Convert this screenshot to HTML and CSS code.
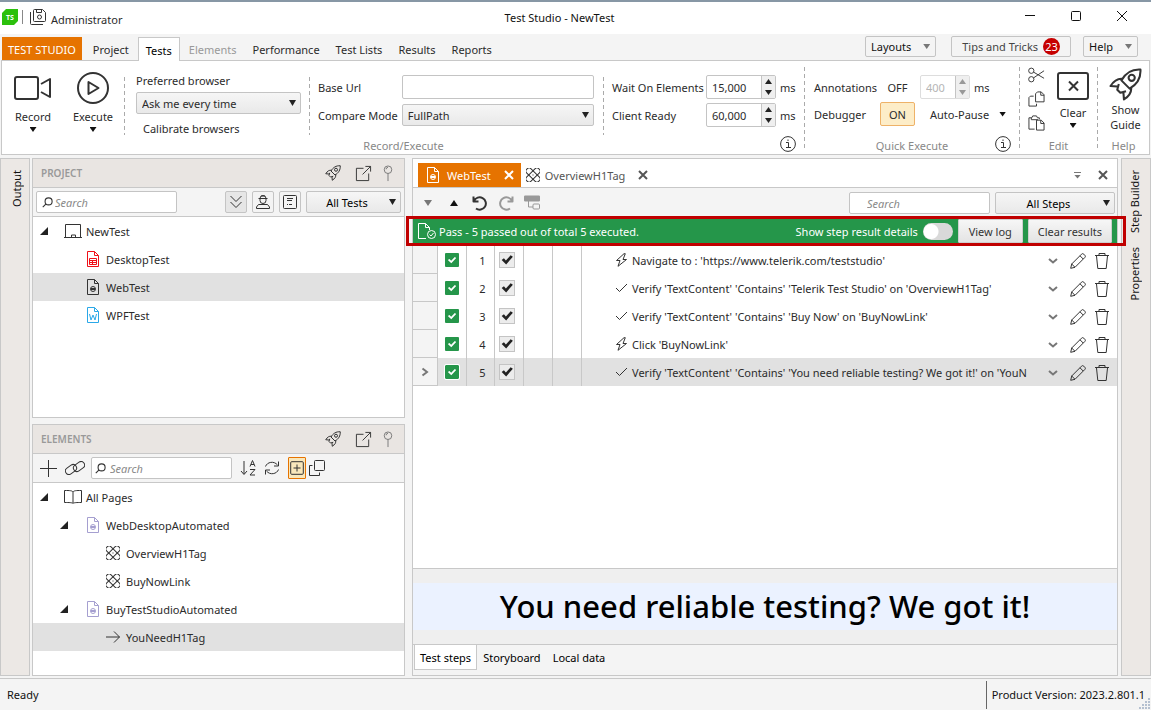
FILE: index.html
```html
<!DOCTYPE html>
<html lang="en">
<head>
<meta charset="utf-8">
<title>Test Studio - NewTest</title>
<link rel="stylesheet" href="styles.css">
</head>
<body>
<svg class="symbols" aria-hidden="true">
  <symbol id="rocket" viewBox="0 0 32 32"><path d="M30.500 1.500C22 1 16 5 12 12l8 8c7-4 11-10 10.500-18.500zM13 10.500C8 10 5 12 1.500 17.500l6.500.5M21.500 19c.500 5-1.500 8-7 11.500L14 24M9.500 15.500L8 21l3 3 5.500-1.500"/><circle cx="22" cy="9.500" r="3"/></symbol>
  <symbol id="popout" viewBox="0 0 18 18"><path d="M9 3.500H1.500v13h13V9M8 10L16.500 1.500M11 1.500h5.500V7"/></symbol>
  <symbol id="pin" viewBox="0 0 10 18"><circle cx="5" cy="5" r="4"/><path d="M5 9v8M3 4.500a2 2 0 0 1 2-2"/></symbol>
  <symbol id="doc" viewBox="0 0 12 16"><path d="M.5.5h7l4 4v11H.5zM7.500.5v4h4"/></symbol>
  <symbol id="webdoc" viewBox="0 0 12 16"><path d="M.5.5h7l4 4v11H.5zM7.500.5v4h4"/><circle cx="6" cy="10" r="2.500"/><path d="M4 9.500h4M4 10.500h4"/></symbol>
  <symbol id="atom" viewBox="0 0 14 14"><rect x="4" y="-1.500" width="6" height="17" rx="2.400" transform="rotate(45 7 7)"/><rect x="4" y="-1.500" width="6" height="17" rx="2.400" transform="rotate(-45 7 7)"/><path d="M6.500 7h1"/></symbol>
  <symbol id="lens" viewBox="0 0 10 10"><circle cx="6" cy="4" r="3.200"/><path d="M3.700 6.300L.7 9.300"/></symbol>
  <symbol id="info" viewBox="0 0 16 16"><circle cx="8" cy="8" r="7.400"/><path d="M6 6.500h2.500v5M6 11.500h5M8 3.500v1.500"/></symbol>
  <symbol id="pencil" viewBox="0 0 16 16"><path d="M.7 15.300l1-4.300L11.500 1.200a1.600 1.600 0 0 1 2.300 0l1 1a1.600 1.600 0 0 1 0 2.300L5 14.300zM10 2.800L13.200 6M1.700 11L5 14.300"/></symbol>
  <symbol id="trash" viewBox="0 0 14 16"><path d="M0 2.500h14M4 2.500v-2h6v2M1.500 3l1.300 12.500h8.400L12.500 3"/></symbol>
  <symbol id="bolt" viewBox="0 0 12 14"><path d="M8.500.7L1 7.500h3.500L2.500 13.300 11 6.500H7.500L9.800.7z"/></symbol>
  <symbol id="tick" viewBox="0 0 12 14"><path d="M.5 7l3.500 3.500L11.500 3"/></symbol>
  <symbol id="cross" viewBox="0 0 10 10"><path d="M1 1l8 8M9 1L1 9"/></symbol>
  <symbol id="chevron" viewBox="0 0 10 6"><path d="M1 1l4 3.500L9 1"/></symbol>
</svg>

<header class="titlebar">
  <div class="titlebar-left">
    <svg class="logo" viewBox="0 0 16 16"><path d="M4 0h12v12l-4 4H0V4z"/><text x="8" y="11">TS</text></svg>
    <span class="title-divider"></span>
    <svg class="icon save" viewBox="0 0 16 16"><path d="M4.500.5h8l3 3v8a1 1 0 0 1-1 1h-10a1 1 0 0 1-1-1v-10a1 1 0 0 1 1-1zM6.500.5v3h5v-3M.5 3v11.500a1 1 0 0 0 1 1H13"/><circle cx="9.500" cy="8" r="2"/></svg>
    <span class="user">Administrator</span>
  </div>
  <h1 class="title">Test Studio - NewTest</h1>
  <div class="window-buttons">
    <button aria-label="Minimize"><svg class="icon" viewBox="0 0 10 10"><path d="M0 4.500h10"/></svg></button>
    <button aria-label="Maximize"><svg class="icon" viewBox="0 0 10 10"><rect x=".5" y=".5" width="9" height="9" rx="1"/></svg></button>
    <button aria-label="Close"><svg class="icon" viewBox="0 0 10 10"><path d="M0 0l10 10M10 0L0 10"/></svg></button>
  </div>
</header>

<nav class="menubar">
  <button class="menu-tab brand">TEST STUDIO</button>
  <button class="menu-tab">Project</button>
  <button class="menu-tab selected">Tests</button>
  <button class="menu-tab" disabled>Elements</button>
  <button class="menu-tab">Performance</button>
  <button class="menu-tab">Test Lists</button>
  <button class="menu-tab">Results</button>
  <button class="menu-tab">Reports</button>
  <div class="menu-right">
    <button class="outline-button layouts">Layouts<span class="arrow grey"></span></button>
    <button class="outline-button tips">Tips and Tricks<span class="count">23</span></button>
    <button class="outline-button">Help<span class="arrow grey"></span></button>
  </div>
</nav>

<section class="ribbon">
  <div class="group group-main">
    <div class="group-body">
      <button class="big-button"><svg class="icon heavy camera" viewBox="0 0 38 28"><rect x="1" y="3" width="23" height="22" rx="2"/><path d="M27 10l9-5v18l-9-5"/></svg>Record<span class="arrow"></span></button>
      <button class="big-button"><svg class="icon heavy play" viewBox="0 0 32 32"><circle cx="16" cy="16" r="15"/><path d="M11.500 10v12l10-6z"/></svg>Execute<span class="arrow"></span></button>
      <div class="column browser">
        <label for="browser">Preferred browser</label>
        <span class="select"><select id="browser"><option>Ask me every time</option></select></span>
        <button class="text-button">Calibrate browsers</button>
      </div>
      <div class="column fields">
        <label for="url">Base Url</label><input id="url" class="box" type="text">
        <label for="mode">Compare Mode</label><span class="select"><select id="mode"><option>FullPath</option></select></span>
      </div>
      <div class="column waits">
        <label for="wait">Wait On Elements</label>
        <span class="spinner"><input id="wait" type="text" value="15,000"><span class="spin"><button aria-label="Increase wait"></button><button aria-label="Decrease wait"></button></span></span><span>ms</span>
        <label for="ready">Client Ready</label>
        <span class="spinner"><input id="ready" type="text" value="60,000"><span class="spin"><button aria-label="Increase ready"></button><button aria-label="Decrease ready"></button></span></span><span>ms</span>
      </div>
    </div>
    <div class="group-foot"><span>Record/Execute</span><svg class="icon info"><use href="#info"/></svg></div>
  </div>
  <div class="group group-quick">
    <div class="group-body quick">
      <label for="delay">Annotations</label>
      <button class="toggle">OFF</button>
      <span class="quick-row"><span class="spinner small"><input id="delay" type="text" value="400" disabled><span class="spin"><button aria-label="Increase delay" disabled></button><button aria-label="Decrease delay" disabled></button></span></span><span>ms</span></span>
      <span>Debugger</span>
      <button class="toggle on">ON</button>
      <button class="text-button pause">Auto-Pause<span class="arrow"></span></button>
    </div>
    <div class="group-foot"><span>Quick Execute</span><svg class="icon info"><use href="#info"/></svg></div>
  </div>
  <div class="group group-edit">
    <div class="group-body edit">
      <div class="edit-icons">
        <button aria-label="Cut"><svg class="icon" viewBox="0 0 18 16"><circle cx="3.500" cy="3.500" r="2.800"/><circle cx="3.500" cy="12.500" r="2.800"/><path d="M6 5l11 6.500M6 11l11-7.500"/></svg></button>
        <button aria-label="Copy"><svg class="icon" viewBox="0 0 18 16"><path d="M10 .5h4l3 3v7.500H8V2.500zM6 5H2.500L1 6.500v9h8V13M13.500.5V4H17"/></svg></button>
        <button aria-label="Paste"><svg class="icon" viewBox="0 0 18 16"><path d="M7 14.500H1v-12h3l1-2h4l1 2h2V4M3.500 2.500v2h7M9 5h5l3 3v7.500H9zM13.500 5v3.500H17"/></svg></button>
      </div>
      <button class="big-button clear"><svg class="icon heavy" viewBox="0 0 32 28"><rect x="1" y="1" width="30" height="26" rx="2"/><path d="M12 9.500l9 9M21 9.500l-9 9"/></svg>Clear<span class="arrow"></span></button>
    </div>
    <div class="group-foot"><span>Edit</span></div>
  </div>
  <div class="group group-help">
    <div class="group-body"><button class="big-button guide"><svg class="icon heavy"><use href="#rocket"/></svg>Show Guide</button></div>
    <div class="group-foot"><span>Help</span></div>
  </div>
</section>

<div class="workspace">
  <aside class="rail left"><button>Output</button></aside>

  <div class="side">
    <section class="panel project">
      <header class="panel-head"><h2>PROJECT</h2>
        <button aria-label="Guide"><svg class="icon i16"><use href="#rocket"/></svg></button>
        <button class="popout" aria-label="Pop out"><svg class="icon i18"><use href="#popout"/></svg></button>
        <button aria-label="Pin"><svg class="icon pin"><use href="#pin"/></svg></button>
      </header>
      <div class="toolbar">
        <label class="search"><svg class="icon lens"><use href="#lens"/></svg><input type="text" placeholder="Search" aria-label="Search project"></label>
        <span class="spacer"></span>
        <button class="tool pressed" aria-label="Expand all"><svg class="icon i14" viewBox="0 0 14 14"><path d="M1.500 1L7 6.500 12.500 1M1.500 7L7 12.500 12.500 7"/></svg></button>
        <button class="tool" aria-label="Owner"><svg class="icon i14" viewBox="0 0 14 14"><path d="M2.500 3.500h9M4 3.500a3 3 0 0 1 6 0v2a3 3 0 0 1-6 0zM6 0v2M8 0v2M.5 13.500v-1.500l2-2.500h9l2 2.500v1.500z"/></svg></button>
        <button class="tool" aria-label="Details"><svg class="icon i14" viewBox="0 0 14 14"><rect x=".5" y=".5" width="13" height="13" rx="1"/><path d="M4 3.500h6M4 5.500h5M4 9.500h1M6 9.500h3"/></svg></button>
        <span class="select filter"><select aria-label="Filter tests"><option>All Tests</option></select></span>
      </div>
      <ul class="tree">
        <li class="node l1"><span class="twist"></span><svg class="icon laptop" viewBox="0 0 18 14"><path d="M1.500 13V.5h15V13M0 13.500h18M7.500 13v-2h4v2"/></svg>NewTest</li>
        <li class="node l2 red"><svg class="icon doc" viewBox="0 0 12 16"><use href="#doc"/><path d="M2.500 7.500h7v6h-7zM2.500 9.500h7M2.500 11.500h7M5.500 9v4"/></svg><span>DesktopTest</span></li>
        <li class="node l2 selected"><svg class="icon doc"><use href="#webdoc"/></svg>WebTest</li>
        <li class="node l2 blue"><svg class="icon doc" viewBox="0 0 12 16"><use href="#doc"/><path d="M2.500 7l1.500 6 2-5 2 5 1.500-6"/></svg><span>WPFTest</span></li>
      </ul>
    </section>

    <section class="panel">
      <header class="panel-head"><h2>ELEMENTS</h2>
        <button aria-label="Guide"><svg class="icon i16"><use href="#rocket"/></svg></button>
        <button class="popout" aria-label="Pop out"><svg class="icon i18"><use href="#popout"/></svg></button>
        <button aria-label="Pin"><svg class="icon pin"><use href="#pin"/></svg></button>
      </header>
      <div class="toolbar elements-bar">
        <button aria-label="Add"><svg class="icon i18" viewBox="0 0 17 17"><path d="M8.500 0v17M0 8.500h17"/></svg></button>
        <button aria-label="Link"><svg class="icon link" viewBox="0 0 20 14"><rect x="0" y="5" width="12" height="7" rx="3.500" transform="rotate(-35 6 8.500)"/><rect x="8" y="2" width="12" height="7" rx="3.500" transform="rotate(-35 14 5.500)"/></svg></button>
        <label class="search"><svg class="icon lens"><use href="#lens"/></svg><input type="text" placeholder="Search" aria-label="Search elements"></label>
        <button class="sort" aria-label="Sort"><svg class="icon i16" viewBox="0 0 16 16"><path d="M4 1v13M1 11l3 3.500L7 11M10 6.500l2.500-6 2.500 6M11 4.500h3M10 9.500h5l-5 5.500h5"/></svg></button>
        <button aria-label="Refresh"><svg class="icon i16" viewBox="0 0 16 16"><path d="M1.500 6.500C3 2 10 .5 13.500 5M14.500 1.500V6H10M14.500 9.500C13 14 6 15.500 2.500 11M1.500 14.500V10H6"/></svg></button>
        <button class="lit" aria-label="Highlight"><svg class="icon i14" viewBox="0 0 14 14"><rect x=".7" y=".7" width="12.600" height="12.600" rx="1"/><path d="M7 3.500v7M3.500 7h7"/></svg></button>
        <button aria-label="Duplicate"><svg class="icon i16" viewBox="0 0 16 16"><rect x="5.500" y=".5" width="10" height="10" rx="1"/><path d="M3.500 5.500h-3v10h10v-3"/></svg></button>
      </div>
      <ul class="tree">
        <li class="node l1"><span class="twist"></span><svg class="icon book" viewBox="0 0 18 14"><path d="M9 2C8 .5 6 .5.5.5v12c5 0 7.500 0 8.500 1 1-1 3.500-1 8.500-1V.5C12 .5 10 .5 9 2zM9 2v11"/></svg>All Pages</li>
        <li class="node l2 page"><span class="twist"></span><svg class="icon doc"><use href="#webdoc"/></svg><span>WebDesktopAutomated</span></li>
        <li class="node l3"><svg class="icon i14"><use href="#atom"/></svg>OverviewH1Tag</li>
        <li class="node l3"><svg class="icon i14"><use href="#atom"/></svg>BuyNowLink</li>
        <li class="node l2 page"><span class="twist"></span><svg class="icon doc"><use href="#webdoc"/></svg><span>BuyTestStudioAutomated</span></li>
        <li class="node l3 selected"><svg class="icon i14" viewBox="0 0 14 14"><path d="M0 7h13.500M8 1.500L13.500 7 8 12.500"/></svg>YouNeedH1Tag</li>
      </ul>
    </section>
  </div>

  <main class="editor">
    <div class="doc-tabs">
      <div class="doc-tab active"><svg class="icon doc"><use href="#webdoc"/></svg>WebTest<button aria-label="Close WebTest"><svg class="icon close"><use href="#cross"/></svg></button></div>
      <div class="doc-tab"><svg class="icon i14"><use href="#atom"/></svg>OverviewH1Tag<button aria-label="Close OverviewH1Tag"><svg class="icon close"><use href="#cross"/></svg></button></div>
      <span class="spacer"></span>
      <button class="overflow" aria-label="Tab list"><span class="arrow grey"></span></button>
      <button aria-label="Close all"><svg class="icon close"><use href="#cross"/></svg></button>
    </div>
    <div class="toolbar editor-bar">
      <button class="move" aria-label="Move down"><span class="arrow grey"></span></button>
      <button class="move" aria-label="Move up"><span class="arrow up"></span></button>
      <button aria-label="Undo"><svg class="icon heavy i16" viewBox="0 0 16 16"><path d="M1.500 1.500v5h5M2 6a6.200 6.200 0 1 1 2 7.500"/></svg></button>
      <button class="faded" aria-label="Redo"><svg class="icon heavy i16" viewBox="0 0 16 16"><path d="M14.500 1.500v5h-5M14 6a6.200 6.200 0 1 0-2 7.500"/></svg></button>
      <button class="faded" aria-label="Group"><svg class="icon i16" viewBox="0 0 16 14"><rect x="0" y="0" width="16" height="5" rx="1" fill="currentColor"/><path d="M4.500 5v6H9"/><rect x="9" y="8" width="6.500" height="5" rx="1"/></svg></button>
      <span class="spacer"></span>
      <label class="search steps-search"><input type="text" placeholder="Search" aria-label="Search steps"></label>
      <span class="select steps-filter"><select aria-label="Filter steps"><option>All Steps</option></select></span>
    </div>
    <div class="result">
      <svg class="icon result-icon" viewBox="0 0 18 16"><path d="M8 15.500H.5V.5h7l4 4V7M7.500.5v4h4"/><circle cx="13.500" cy="11.500" r="4"/><path d="M11.500 11.500l1.500 1.500 2.500-3"/></svg>
      <span>Pass - 5 passed out of total 5 executed.</span>
      <span class="spacer"></span>
      <label class="switch">Show step result details<input type="checkbox"></label>
      <button class="result-button">View log</button>
      <button class="result-button">Clear results</button>
    </div>
    <div class="steps-area">
      <table class="steps">
        <colgroup><col class="c-mark"><col class="c-status"><col class="c-num"><col class="c-check"><col class="c-indent"><col class="c-indent"><col><col class="c-actions"></colgroup>
        <tbody>
          <tr><td></td><td><span class="passed"></span></td><td>1</td><td><input type="checkbox" aria-label="Enable step 1" checked></td><td></td><td></td><td><div class="step"><svg class="icon"><use href="#bolt"/></svg>Navigate to : 'https://www.telerik.com/teststudio'</div></td><td><div class="actions"><button aria-label="Expand"><svg class="icon chev"><use href="#chevron"/></svg></button><button aria-label="Edit"><svg class="icon i16"><use href="#pencil"/></svg></button><button aria-label="Delete"><svg class="icon trash"><use href="#trash"/></svg></button></div></td></tr>
          <tr><td></td><td><span class="passed"></span></td><td>2</td><td><input type="checkbox" aria-label="Enable step 2" checked></td><td></td><td></td><td><div class="step"><svg class="icon"><use href="#tick"/></svg>Verify 'TextContent' 'Contains' 'Telerik Test Studio' on 'OverviewH1Tag'</div></td><td><div class="actions"><button aria-label="Expand"><svg class="icon chev"><use href="#chevron"/></svg></button><button aria-label="Edit"><svg class="icon i16"><use href="#pencil"/></svg></button><button aria-label="Delete"><svg class="icon trash"><use href="#trash"/></svg></button></div></td></tr>
          <tr><td></td><td><span class="passed"></span></td><td>3</td><td><input type="checkbox" aria-label="Enable step 3" checked></td><td></td><td></td><td><div class="step"><svg class="icon"><use href="#tick"/></svg>Verify 'TextContent' 'Contains' 'Buy Now' on 'BuyNowLink'</div></td><td><div class="actions"><button aria-label="Expand"><svg class="icon chev"><use href="#chevron"/></svg></button><button aria-label="Edit"><svg class="icon i16"><use href="#pencil"/></svg></button><button aria-label="Delete"><svg class="icon trash"><use href="#trash"/></svg></button></div></td></tr>
          <tr><td></td><td><span class="passed"></span></td><td>4</td><td><input type="checkbox" aria-label="Enable step 4" checked></td><td></td><td></td><td><div class="step"><svg class="icon"><use href="#bolt"/></svg>Click 'BuyNowLink'</div></td><td><div class="actions"><button aria-label="Expand"><svg class="icon chev"><use href="#chevron"/></svg></button><button aria-label="Edit"><svg class="icon i16"><use href="#pencil"/></svg></button><button aria-label="Delete"><svg class="icon trash"><use href="#trash"/></svg></button></div></td></tr>
          <tr class="current"><td><svg class="icon current-mark" viewBox="0 0 8 10"><path d="M1.500 1.500L6 5 1.500 8.500"/></svg></td><td><span class="passed"></span></td><td>5</td><td><input type="checkbox" aria-label="Enable step 5" checked></td><td></td><td></td><td><div class="step"><svg class="icon"><use href="#tick"/></svg>Verify 'TextContent' 'Contains' 'You need reliable testing? We got it!' on 'YouN</div></td><td><div class="actions"><button aria-label="Expand"><svg class="icon chev"><use href="#chevron"/></svg></button><button aria-label="Edit"><svg class="icon i16"><use href="#pencil"/></svg></button><button aria-label="Delete"><svg class="icon trash"><use href="#trash"/></svg></button></div></td></tr>
        </tbody>
      </table>
    </div>
    <div class="preview"><div class="preview-text">You need reliable testing? We got it!</div></div>
    <nav class="bottom-tabs">
      <button class="selected">Test steps</button><button>Storyboard</button><button>Local data</button>
    </nav>
  </main>

  <aside class="rail right"><button>Step Builder</button><button>Properties</button></aside>
</div>

<footer class="statusbar">
  <span>Ready</span>
  <span class="version">Product Version: 2023.2.801.1</span>
  <svg class="grip" viewBox="0 0 11 11" aria-hidden="true"><path d="M9 0h2v2H9zM6 3h2v2H6zM9 3h2v2H9zM3 6h2v2H3zM6 6h2v2H6zM9 6h2v2H9zM0 9h2v2H0zM3 9h2v2H3zM6 9h2v2H6zM9 9h2v2H9z"/></svg>
</footer>
</body>
</html>
```

FILE: styles.css
```css
* { box-sizing: border-box; }

body {
  margin: 0;
  min-height: 100vh;
  display: flex;
  flex-direction: column;
  background: #f4f4f4;
  color: #2b2b2b;
  font: 11px/15px "Noto Sans", "Open Sans", sans-serif;
}

button, input, select { font: inherit; color: inherit; margin: 0; }
button { display: flex; align-items: center; justify-content: center; padding: 0; border: 0; background: none; white-space: nowrap; }
label, span { white-space: nowrap; }

.symbols { display: none; }
.icon { display: block; flex: none; fill: none; stroke: #333; stroke-width: 1; color: #333; }
.heavy { stroke-width: 2; stroke-linejoin: round; }
.i14 { width: 14px; height: 14px; }
.i16 { width: 16px; height: 16px; }
.i18 { width: 17px; height: 17px; }
.spacer { flex: 1; }

.arrow {
  width: 7px;
  height: 5px;
  flex: none;
  background: #111;
  clip-path: polygon(0 0, 100% 0, 50% 100%);
}
.arrow.grey { background: #777; }
.arrow.up { clip-path: polygon(50% 0, 100% 100%, 0 100%); }

/* Title bar */
.titlebar {
  display: grid;
  grid-template-columns: 1fr auto 1fr;
  align-items: center;
  height: 34px;
  padding-bottom: 2px;
  border-top: 2px solid #8797a5;
  background: #fff;
}
.titlebar-left { display: flex; align-items: center; gap: 4px; padding-left: 2px; }
.logo { width: 16px; height: 16px; fill: #2cc00d; }
.logo text { fill: #fff; font: bold 7px "Noto Sans", sans-serif; text-anchor: middle; }
.title-divider { width: 1px; height: 14px; margin: 0 3px 0 0; background: #888; }
.save { width: 16px; height: 16px; }
.user { padding: 5px 0 0 1px; }
.title { margin: 0 32px 0 0; font-size: 11px; font-weight: 400; color: #111; }
.window-buttons { display: flex; justify-content: flex-end; padding: 0 6px 2px 0; }
.window-buttons button { width: 46px; height: 26px; }
.window-buttons .icon { width: 10px; height: 10px; stroke: #111; }

/* Menu bar */
.menubar {
  position: relative;
  display: flex;
  align-items: flex-end;
  height: 26px;
  padding: 0 13px 0 2px;
}
.menu-tab { height: 23px; padding: 2px 8px 0; }
.menu-tab:disabled { color: #999; }
.menu-tab.brand { margin-right: 3px; padding: 2px 6px 0; background: #e67300; color: #fff; }
.menu-tab.selected {
  z-index: 1;
  height: 24px;
  margin: 0 1px -1px;
  padding: 1px 7px 0;
  border: 1px solid #c8c8c8;
  border-bottom: 0;
  background: #fff;
  color: #000;
}
.menu-right { display: flex; gap: 12px; margin-left: auto; padding-bottom: 3px; }
.outline-button {
  gap: 12px;
  height: 21px;
  padding: 0 5px;
  border: 1px solid #c4c4c4;
  border-radius: 2px;
  color: #111;
}
.outline-button.layouts { margin-right: 3px; }
.outline-button.tips { gap: 5px; padding: 0 10px; color: #444; }
.count {
  width: 17px;
  height: 17px;
  border-radius: 50%;
  background: #c60000;
  color: #fff;
  line-height: 17px;
}

/* Ribbon */
.ribbon {
  display: flex;
  margin: 0 1px;
  min-height: 95px;
  border: 1px solid #c8c8c8;
  background: #fff;
}
.group { display: flex; flex-direction: column; }
.group + .group {
  border-left: 1px solid transparent;
  background: repeating-linear-gradient(#aaa 0 4px, transparent 4px 7px) left 6px / 1px 83px no-repeat border-box;
}
.group-main { flex: 1; padding-left: 1px; }
.group-quick { width: 215px; }
.group-edit { width: 78px; }
.group-help { width: 52px; }
.group-body { display: flex; flex: 1; }
.group-foot {
  display: grid;
  grid-template-columns: 1fr auto 1fr;
  height: 18px;
  padding: 0 8px;
  color: #888;
}
.group-foot span { grid-column: 2; align-self: center; }
.group-edit .group-foot, .group-help .group-foot { padding: 0; }
.info { width: 16px; height: 16px; justify-self: end; align-self: start; }

.big-button { flex-direction: column; justify-content: flex-start; width: 60px; }
.big-button .icon { margin-bottom: 5px; }
.big-button .arrow { margin-top: 3px; }
.group-main .big-button { padding-top: 11px; }
.camera { width: 38px; height: 32px; }
.play { width: 32px; height: 32px; }

.column {
  padding: 14px 9px 0;
  background: repeating-linear-gradient(#aaa 0 4px, transparent 4px 7px) left 16px / 1px 58px no-repeat;
}
.browser { display: flex; flex-direction: column; align-items: flex-start; width: 185px; margin-left: 1px; padding: 12px 8px 0 12px; gap: 4px; }
.browser .text-button { margin: 3px 0 0 7px; }
.browser .select { width: 100%; }
.fields { display: grid; grid-template-columns: auto 1fr; grid-auto-rows: 24px; gap: 4px; align-items: center; align-content: start; flex: 1; }
.waits { display: grid; grid-template-columns: 90px 70px auto; grid-auto-rows: 24px; column-gap: 4px; row-gap: 4px; align-items: center; align-content: start; width: 201px; }

.box, .spinner, .search {
  border: 1px solid #c4c4c4;
  border-radius: 2px;
  background: #fff;
}
.box { width: 100%; height: 24px; padding: 0 5px; }
.select {
  position: relative;
  display: block;
  border: 1px solid #c4c4c4;
  border-radius: 2px;
  background: linear-gradient(#f6f6f6, #e9e9e9);
}
.select select {
  display: block;
  width: 100%;
  height: 20px;
  padding: 0 18px 0 5px;
  border: 0;
  background: none;
  appearance: none;
}
.select::after {
  content: "";
  position: absolute;
  top: 7px;
  right: 4px;
  width: 7px;
  height: 6px;
  background: #222;
  clip-path: polygon(0 0, 100% 0, 50% 100%);
  pointer-events: none;
}
.spinner { display: flex; height: 24px; }
.spinner input { flex: 1; min-width: 0; padding: 0 5px; border: 0; background: none; }
.spin { display: flex; flex-direction: column; width: 14px; border-left: 1px solid #c4c4c4; background: #efefef; }
.spin button { flex: 1; }
.spin button::before { content: ""; width: 7px; height: 5px; background: #222; clip-path: polygon(50% 0, 100% 100%, 0 100%); }
.spin button + button::before { clip-path: polygon(0 0, 100% 0, 50% 100%); }
.spinner.small { width: 50px; border-color: #ddd; color: #b5b5b5; }
.spinner.small button::before { background: #999; }

.quick { display: grid; grid-template-columns: 66px 35px 1fr; grid-template-rows: 24px 24px; row-gap: 3px; align-content: start; align-items: center; padding: 14px 9px 0; }
.quick-row { display: flex; align-items: center; gap: 4px; padding-left: 5px; }
.toggle { height: 24px; border: 1px solid transparent; }
.toggle.on { border-color: #eeb268; border-radius: 2px; background: #fdedc8; }
.pause { justify-content: flex-start; gap: 10px; padding-left: 15px; }

.edit { padding: 6px 8px 0; gap: 12px; }
.edit-icons { display: flex; flex-direction: column; gap: 8px; }
.edit-icons .icon { width: 17px; height: 16px; }
.clear { width: 32px; padding-top: 5px; }
.clear .icon { width: 32px; height: 28px; }
.guide { width: 100%; padding: 7px 0 0 4px; white-space: normal; }
.guide .icon { width: 33px; height: 33px; margin-bottom: 1px; }

/* Workspace */
.workspace { display: flex; flex: 1; padding: 3px 0 2px; }
.rail { display: flex; flex-direction: column; width: 30px; padding-top: 11px; border: 1px solid #c8c8c8; background: #ece8e5; }
.rail button { margin-bottom: 14px; writing-mode: vertical-rl; transform: rotate(180deg); color: #111; }
.rail.left button { padding-right: 3px; }
.rail.right button { padding-left: 4px; }
.side { display: flex; flex-direction: column; gap: 6px; width: 373px; margin: 0 7px 0 2px; }
.panel { border: 1px solid #c8c8c8; background: #fff; }
.panel.project { flex: 1; }
.panel:last-child { min-height: 252px; }

.panel-head { display: flex; align-items: center; gap: 11px; height: 29px; padding: 0 11px 0 8px; border-bottom: 1px solid #c8c8c8; background: #e9e5e2; }
.panel-head h2 { flex: 1; margin: 0; font-size: 10px; font-weight: 600; color: #999; }
.popout { margin-left: 3px; }
.pin { width: 10px; height: 17px; stroke: #777; }
.panel-head .i16 { stroke-width: 2; }

.toolbar { display: flex; align-items: center; gap: 5px; height: 29px; padding: 0 3px; border-bottom: 1px solid #c8c8c8; background: #f4f4f4; }
.search { display: flex; align-items: center; gap: 2px; width: 141px; height: 22px; padding-left: 5px; }
.search input { flex: 1; min-width: 0; padding: 0; border: 0; outline: 0; background: none; }
.search input::placeholder { color: #888; font-style: italic; opacity: 1; }
.lens { width: 11px; height: 11px; }
.tool { width: 22px; height: 22px; border: 1px solid #c4c4c4; border-radius: 2px; }
.tool.pressed { background: #e6e6e6; }
.filter { width: 95px; }
.filter select, .steps-filter select { text-align-last: center; color: #000; }
.elements-bar { gap: 8px; padding-left: 7px; }
.elements-bar > .search { margin-left: -2px; padding-left: 3px; gap: 4px; }
.elements-bar .lit { width: 18px; height: 22px; border: 1px solid #e67300; border-radius: 1px; background: #f8e7bb; }
.elements-bar .lit + button { margin-left: -5px; }
.link { width: 20px; height: 14px; }

.tree { margin: 0; padding: 0; list-style: none; }
.node { position: relative; display: flex; align-items: center; gap: 5px; height: 28px; }
.node.selected { background: #e1e1e1; }
.l1 { padding-left: 31px; gap: 4px; }
.l2 { padding-left: 54px; gap: 7px; }
.l3 { padding-left: 73px; gap: 6px; }
.laptop, .book { width: 18px; height: 14px; }
.doc { width: 12px; height: 16px; }
.red .icon { stroke: #f01018; }
.blue .icon { stroke: #2aa8e8; }
.page .icon { stroke: #a59fd0; }
.twist { position: absolute; left: 7px; width: 8px; height: 8px; background: #222; clip-path: polygon(100% 0, 100% 100%, 0 100%); }
.l2 .twist { left: 27px; }

/* Editor */
.editor { display: flex; flex-direction: column; flex: 1; min-width: 0; border: 1px solid #c8c8c8; background: #fff; }
.doc-tabs { display: flex; align-items: center; gap: 5px; height: 29px; padding: 4px 9px 0 5px; border-bottom: 1px solid #c8c8c8; }
.doc-tab { display: flex; align-items: center; align-self: stretch; gap: 5px; color: #555; }
.doc-tab button { margin-left: 8px; }
.doc-tab.active { gap: 8px; padding: 0 7px 0 9px; background: #e67300; color: #fff; }
.active .icon { stroke: #fff; }
.doc-tab.active button { margin-left: 5px; }
.close { width: 10px; height: 10px; stroke-width: 2; stroke: #555; }
.active .close { stroke: #fff; }
.overflow { margin-right: 12px; padding-top: 2px; border-top: 1px solid #777; }
.overflow .arrow { height: 4px; }
.editor-bar { gap: 10px; height: 30px; padding: 0 2px 0 7px; border: 0; }
.move { width: 16px; }
.move .arrow { width: 8px; height: 6px; }
.faded .icon { stroke: #999; color: #999; }
.steps-search { padding-left: 17px; }
.steps-filter { width: 120px; margin-left: -5px; }

.result { position: relative; display: flex; align-items: center; gap: 5px; height: 28px; padding: 0 5px 2px; background: #25964a; color: #fff; }
.result::after { content: ""; position: absolute; inset: -2px -9px 0 -7px; border: 3px solid #c00000; pointer-events: none; }
.result-icon { width: 18px; height: 16px; margin-right: -2px; stroke: #fff; }
.switch { display: flex; align-items: center; gap: 5px; }
.switch input { width: 30px; height: 17px; border-radius: 9px; appearance: none; background: radial-gradient(circle at 8px 50%, #fff 0 7px, transparent 8px) #d9d9d9; }
.result-button { min-width: 65px; height: 24px; padding: 0 9px; border: 1px solid #cfcfcf; border-radius: 1px; background: linear-gradient(#f6f6f6, #e4e4e4); color: #333; }

.steps-area { flex: 1; }
.steps { width: 100%; table-layout: fixed; border-collapse: separate; border-spacing: 0; }
.steps td { height: 28px; padding: 0; border-right: 1px solid #c8c8c8; text-align: center; }
.steps td:first-child { border-bottom: 1px solid #c8c8c8; background: #f4f4f4; }
.steps td:nth-child(3) { padding-left: 4px; }
.steps td:nth-child(4) { padding-right: 4px; }
.steps td:nth-child(n+7) { border-right: 0; text-align: left; }
.c-mark { width: 25px; }
.c-status, .c-check, .c-indent { width: 29px; }
.c-num { width: 28px; }
.c-actions { width: 78px; }
.steps .current td { background: #e1e1e1; }
.steps .current td:first-child { background: #f4f4f4; }
.passed { display: block; width: 14px; height: 14px; margin: auto; border-radius: 1px; background: #25964a; }
.passed::before, .steps input::before {
  content: "";
  display: block;
  width: 100%;
  height: 100%;
  background: #fff;
  clip-path: polygon(20% 50%, 32% 42%, 44% 56%, 70% 28%, 80% 36%, 45% 74%);
}
.current .passed { outline: 1px solid #fff; }
.steps input { display: block; width: 16px; height: 16px; margin: auto; border: 1px solid #c4c4c4; appearance: none; background: #ececec; }
.steps input::before { background: #222; clip-path: polygon(12% 50%, 28% 38%, 42% 54%, 76% 16%, 92% 26%, 44% 82%); }
.current-mark { width: 8px; height: 10px; margin: auto; stroke: #777; stroke-width: 2; }
.step { display: flex; align-items: center; gap: 4px; padding-left: 33px; overflow: hidden; white-space: nowrap; }
.step .icon { width: 13px; height: 14px; }
.actions { display: flex; align-items: center; gap: 9px; padding: 1px 0 0 9px; }
.actions button:first-child { margin-right: 3px; }
.chev { width: 10px; height: 6px; stroke-width: 2; stroke: #777; }
.trash { width: 14px; height: 16px; }

.preview { padding: 14px 0; border-top: 1px solid #c8c8c8; border-bottom: 1px solid #c8c8c8; background: #efefef; }
.preview-text { background: #ebf2ff; color: #000; font-size: 31px; line-height: 47px; font-weight: 500; text-align: center; }
.bottom-tabs { display: flex; height: 30px; padding-left: 1px; background: #f4f4f4; }
.bottom-tabs button { height: 25px; padding: 0 6px; color: #000; }
.bottom-tabs .selected { border: 1px solid #c8c8c8; border-top: 0; background: #fff; padding: 0 5px; }
.rail.right { margin-left: 3px; }

/* Status bar */
.statusbar { position: relative; display: flex; align-items: center; justify-content: space-between; height: 32px; padding: 0 6px 0 7px; border-top: 1px solid #c8c8c8; color: #111; }
.version { display: flex; align-items: center; height: 28px; padding-left: 5px; border-left: 1px solid #666; }
.grip { position: absolute; right: 1px; bottom: 1px; width: 11px; height: 11px; fill: #b4c0d0; }
```
